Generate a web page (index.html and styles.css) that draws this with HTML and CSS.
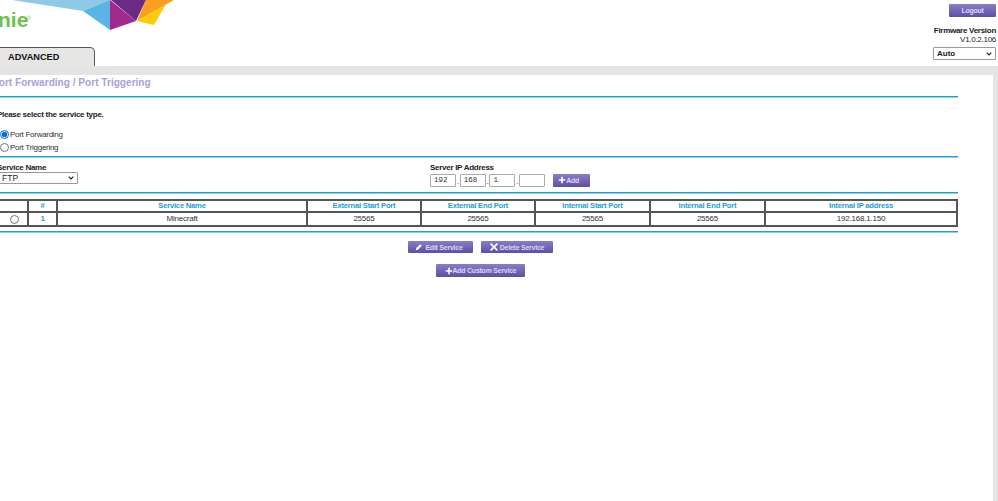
FILE: index.html
```html
<!DOCTYPE html>
<html lang="en">
<head>
<meta charset="utf-8">
<title>Port Forwarding / Port Triggering</title>
<link rel="stylesheet" href="styles.css">
</head>
<body>
<header class="header">
  <div class="brand">
    <svg class="logo" width="180" height="32" viewBox="0 0 180 32">
      <polygon points="12,0 111,0 83,11" fill="#8fc9e8"/>
      <polygon points="83,11 110,0 110,30" fill="#5bb5e4"/>
      <polygon points="110,0 136,21 110,30" fill="#a02a8e"/>
      <polygon points="111,0 146,0 136,21" fill="#6c2a85"/>
      <polygon points="146,0 174,0 137,21" fill="#f99d25"/>
      <polygon points="137,21 166,4 154,25" fill="#fecb0a"/>
    </svg>
    <span class="genie">nie<sup class="reg">®</sup></span>
    <div class="tab">ADVANCED</div>
  </div>
  <div class="account">
    <button class="btn logout">Logout</button>
    <div class="fw-label">Firmware Version</div>
    <div class="fw-num">V1.0.2.106</div>
    <select class="lang"><option>Auto</option></select>
  </div>
</header>
<div class="band">
  <main class="panel">
    <h1 class="title">Port Forwarding / Port Triggering</h1>
    <div class="rule rule-title"></div>
    <p class="prompt">Please select the service type.</p>
    <label class="radio-row first"><input type="radio" name="t" checked>Port Forwarding</label>
    <label class="radio-row"><input type="radio" name="t">Port Triggering</label>
    <div class="rule rule-radio"></div>
    <div class="service">
      <div class="svc-col">
        <div class="field-label">Service Name</div>
        <select class="svc-select"><option>FTP</option></select>
      </div>
      <div class="ip-col">
        <div class="field-label">Server IP Address</div>
        <div class="ip-row">
          <input class="octet" value="192"><i class="dot">.</i>
          <input class="octet" value="168"><i class="dot">.</i>
          <input class="octet" value="1"><i class="dot">.</i>
          <input class="octet" value="">
          <button class="btn add"><svg class="ico" viewBox="0 0 10 10"><path d="M4 1h2v3h3v2H6v3H4V6H1V4h3z"/></svg>Add</button>
        </div>
      </div>
    </div>
    <div class="rule rule-service"></div>
    <table class="ports">
      <colgroup>
        <col class="c0"><col class="c1"><col class="c2"><col class="c3"><col class="c3"><col class="c5"><col class="c5"><col class="c4">
      </colgroup>
      <thead>
        <tr><th></th><th>#</th><th>Service Name</th><th>External Start Port</th><th>External End Port</th><th>Internal Start Port</th><th>Internal End Port</th><th>Internal IP address</th></tr>
      </thead>
      <tbody>
        <tr><td><input type="radio" class="row-radio"></td><td class="num">1</td><td>Minecraft</td><td>25565</td><td>25565</td><td>25565</td><td>25565</td><td>192.168.1.150</td></tr>
      </tbody>
    </table>
    <div class="rule rule-table"></div>
    <div class="actions">
      <button class="btn edit"><svg class="ico" viewBox="0 0 10 10"><path d="M1 9l.6-2.6L6.5 1.5l2 2-4.9 4.9z"/></svg>Edit Service</button>
      <button class="btn del"><svg class="ico" viewBox="0 0 10 10"><path d="M1.5 0L5 3.5 8.5 0 10 1.5 6.5 5 10 8.5 8.5 10 5 6.5 1.5 10 0 8.5 3.5 5 0 1.5z"/></svg>Delete Service</button>
    </div>
    <div class="actions custom">
      <button class="btn custom-btn"><svg class="ico" viewBox="0 0 10 10"><path d="M4 1h2v3h3v2H6v3H4V6H1V4h3z"/></svg>Add Custom Service</button>
    </div>
  </main>
</div>
</body>
</html>
```

FILE: styles.css
```css
* { box-sizing: border-box; }
html, body { margin: 0; height: 501px; overflow: hidden; background: #fff; }
body { font-family: "Liberation Sans", Arial, sans-serif; font-size: 8px; letter-spacing: -0.28px; color: #222; }

.header { display: flex; justify-content: space-between; height: 66px; }
.brand { position: relative; width: 180px; }
.logo { display: block; }
.genie { position: absolute; left: -2px; top: 8px; font-size: 21px; letter-spacing: 0; font-weight: 700; color: #6dc24b; line-height: 24px; }
.reg { position: absolute; left: 29px; top: 7px; font-size: 5px; line-height: 6px; font-weight: 400; }
.tab {
  margin: 15px 0 0 -20px; width: 115px; height: 19px; padding-left: 27px;
  background: #e6e7e5; border: 1px solid #555; border-bottom: 0; border-radius: 0 5px 0 0;
  font-size: 9.2px; letter-spacing: 0; font-weight: 700; color: #111; line-height: 18px;
}
.account { width: 65px; margin-right: 2px; text-align: right; display: flex; flex-direction: column; align-items: flex-end; padding-top: 4px; }
.fw-label { margin-top: 9px; font-weight: 700; line-height: 9px; white-space: nowrap; color: #222; }
.fw-num { line-height: 9px; }
.lang {
  appearance: none; width: 63px; height: 13px; margin-top: 3px; padding: 0 0 0 3px;
  font: 700 8px "Liberation Sans", Arial, sans-serif; letter-spacing: 0; color: #222;
  border: 1px solid #999; border-radius: 1px;
  background: #fff url("data:image/svg+xml,%3Csvg xmlns='http://www.w3.org/2000/svg' width='6' height='4'%3E%3Cpath d='M.7.7L3 3l2.3-2.3' fill='none' stroke='%23222' stroke-width='1.2'/%3E%3C/svg%3E") no-repeat right 3px center;
}

.btn {
  display: inline-flex; align-items: center; justify-content: center; gap: 2px; padding: 0; height: 12px;
  border: 0; border-radius: 1px; background: linear-gradient(#8a7cc9, #5f4fa3);
  color: #dcd7f2; font: 700 7px "Liberation Sans", Arial, sans-serif; letter-spacing: -0.25px;
}
.ico { width: 8px; height: 8px; fill: #fff; }
.logout { width: 47px; height: 13px; }

.band { background: #e4e4e4; padding: 9px 5px 0 0; height: 435px; }
.panel { background: #fff; height: 426px; margin-left: -12px; padding-left: 12px; position: relative; overflow: hidden; }
.title { margin: 0 0 0 -8px; padding: 2px 0 0 0; font-size: 10.1px; letter-spacing: 0; line-height: 12px; color: #a99fd9; font-weight: 700; }
.rule { height: 2px; background: linear-gradient(#1ba1d4 50%, #8fd0ea 50%); width: 970px; margin-left: -12px; }
.rule-title { margin-top: 7px; }
.prompt { margin: 12px 0 0 -12px; padding-left: 9px; font-weight: 700; line-height: 10px; }
.radio-row { display: flex; align-items: center; height: 13px; color: #333; }
.radio-row.first { margin-top: 8px; }
.radio-row input { width: 9px; height: 9px; margin: 0 1px 0 0; accent-color: #0a6ed1; }
.rule-radio { margin-top: 2px; }
.service { display: flex; height: 34px; margin-left: -3px; }
.svc-col { width: 434px; padding-top: 5px; }
.field-label { font-weight: 700; line-height: 10px; }
.svc-select {
  appearance: none; display: block; width: 81px; height: 12px; margin-top: -1px; padding: 0 0 0 4px;
  font: 8.5px "Liberation Sans", Arial, sans-serif; color: #222;
  border: 1px solid #999; border-radius: 1px;
  background: #fff url("data:image/svg+xml,%3Csvg xmlns='http://www.w3.org/2000/svg' width='6' height='4'%3E%3Cpath d='M.7.7L3 3l2.3-2.3' fill='none' stroke='%23222' stroke-width='1.2'/%3E%3C/svg%3E") no-repeat right 3px center;
}
.ip-col { padding-top: 5px; margin-left: -1px; }
.ip-row { display: flex; align-items: center; margin-top: -1px; }
.octet { width: 26px; height: 13px; padding: 0 0 0 3px; border: 1px solid #aaa; border-radius: 1px; font: 7.5px "Liberation Mono", monospace; letter-spacing: 0; color: #333; }
.dot { width: 3.7px; font-style: normal; text-align: center; line-height: 13px; padding-top: 3px; }
.add { width: 37px; margin-left: 8px; height: 13px; gap: 0; padding-right: 6px; }
.ports { margin: 5px 0 0 -14px; border-collapse: collapse; table-layout: fixed; width: 970px; border: 2px solid #555; }
.c0 { width: 41px; } .c1 { width: 29px; } .c2 { width: 250px; } .c3 { width: 114px; } .c5 { width: 115px; } .c4 { width: 192px; }
.ports th, .ports td { border: 2px solid #555; padding: 0; text-align: center; }
.ports th { height: 12px; color: #1e9fd0; font-weight: 700; font-size: 7.6px; letter-spacing: -0.2px; line-height: 10px; border-top-width: 1px; }
.ports td { height: 14px; padding-bottom: 1px; color: #333; letter-spacing: -0.2px; }
.ports td.num { color: #1e9fd0; font-weight: 700; }
.row-radio { width: 9px; height: 9px; margin: 1px 8px 0 auto; display: block; }
.rule-table { margin-top: 4px; }
.actions { display: flex; gap: 8px; margin-top: 8px; padding-left: 408px; }
.edit { width: 65px; padding-right: 3px; }
.del { width: 72px; }
.custom { margin-top: 11px; padding-left: 436px; }
.custom-btn { width: 89px; height: 13px; gap: 0; }
```
